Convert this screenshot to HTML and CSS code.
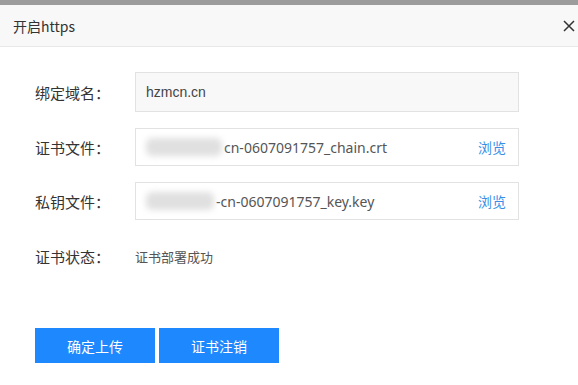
FILE: index.html
```html
<!DOCTYPE html>
<html lang="zh-CN">
<head>
  <meta charset="UTF-8" />
  <title>开启https</title>
  <link rel="stylesheet" href="styles.css">
</head>
<body>
  <div class="topbar"></div>
  <div class="dialog">
    <div class="dialog-head">
      <span class="dialog-title">开启https</span>
      <svg class="close" viewBox="0 0 12 12" width="12" height="12">
        <path d="M1 1 L11 11 M11 1 L1 11" stroke="#333" stroke-width="1.5" fill="none"/>
      </svg>
    </div>
    <div class="dialog-body">
      <div class="row">
        <label class="row-label">绑定域名：</label>
        <div class="field readonly"><span class="field-text">hzmcn.cn</span></div>
      </div>
      <div class="row">
        <label class="row-label">证书文件：</label>
        <div class="field">
          <span class="field-text"><span class="mask"></span>cn-0607091757_chain.crt</span>
          <a class="browse">浏览</a>
        </div>
      </div>
      <div class="row">
        <label class="row-label">私钥文件：</label>
        <div class="field">
          <span class="field-text"><span class="mask mask-long"></span>-cn-0607091757_key.key</span>
          <a class="browse">浏览</a>
        </div>
      </div>
      <div class="row status-row">
        <label class="row-label">证书状态：</label>
        <span class="status">证书部署成功</span>
      </div>
      <div class="actions">
        <button class="btn">确定上传</button>
        <button class="btn">证书注销</button>
      </div>
    </div>
  </div>
</body>
</html>
```

FILE: styles.css
```css
body { margin: 0; padding: 0; background: #fff; font-family: "Noto Sans CJK SC", "Liberation Sans", sans-serif; color: #333; }
.topbar { height: 5px; background: #9c9c9c; }
.dialog-head { height: 41px; background: #f8f8f8; border-bottom: 1px solid #e8e8e8; display: flex; align-items: center; justify-content: space-between; padding: 0 3px 0 13px; }
.dialog-title { font-size: 14px; color: #333; }
.close { display: block; margin-top: 1px; }
.dialog-body { padding: 25px 0 0 35px; }
.row { display: flex; align-items: center; margin-bottom: 16px; }
.row-label { width: 100px; font-size: 15px; color: #333; }
.field { height: 36px; border: 1px solid #e2e2e2; display: flex; align-items: center; justify-content: space-between; padding: 0 12px 0 10px; box-sizing: content-box; width: 360px; }
.field.readonly { background: #f8f8f8; height: 38px; }
.field-text { font-size: 14px; color: #555; display: flex; align-items: center; font-family: "Noto Sans", "Liberation Sans", sans-serif; }
.readonly .field-text { font-family: "Liberation Sans", sans-serif; font-size: 14px; color: #444; }
.mask { display: inline-block; width: 76px; height: 18px; background: #e0e0e0; filter: blur(3px); margin-right: 2px; border-radius: 6px; }
.mask-long { width: 68px; }
.browse { font-size: 14px; color: #3a8ee6; cursor: pointer; }
.status-row { margin-top: 26px; }
.status { font-size: 13px; color: #555; }
.actions { display: flex; gap: 4px; margin-top: 61px; }
.btn { width: 120px; height: 35px; border: none; background: #1e88fe; color: #fff; font-family: inherit; font-size: 14px; padding: 0; cursor: pointer; }
```
